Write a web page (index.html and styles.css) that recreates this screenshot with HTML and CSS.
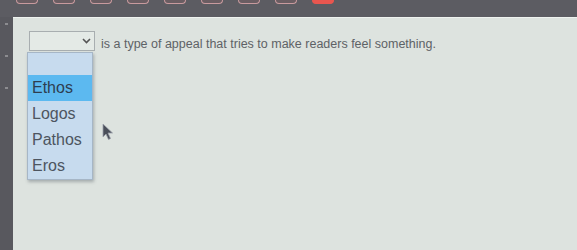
FILE: index.html
```html
<!DOCTYPE html>
<html lang="en">
<head>
    <meta charset="UTF-8">
    <title>Question</title>
    <link rel="stylesheet" href="styles.css">
</head>
<body>

<!-- Question tabs along the top -->
<div class="tabs">
    <span class="tab"></span>
    <span class="tab"></span>
    <span class="tab"></span>
    <span class="tab"></span>
    <span class="tab"></span>
    <span class="tab"></span>
    <span class="tab"></span>
    <span class="tab"></span>
    <span class="tab current"></span>
</div>

<div class="main">
    <div class="gutter">
        <span class="mark"></span>
        <span class="mark"></span>
        <span class="mark"></span>
    </div>

    <div class="panel">
        <div class="question">
            <div class="select">
                <div class="select-box">
                    <svg class="chevron" width="9" height="6" viewBox="0 0 9 6"><path d="M1 1 L4.5 4.5 L8 1" fill="none" stroke="#555" stroke-width="1.6"/></svg>
                </div>
                <ul class="options">
                    <li class="blank"></li>
                    <li class="active">Ethos</li>
                    <li>Logos</li>
                    <li>Pathos</li>
                    <li>Eros</li>
                </ul>
            </div>
            <span class="prompt">is a type of appeal that tries to make readers feel something.</span>
        </div>

        <!-- mouse pointer -->
        <svg class="pointer" width="12" height="18" viewBox="0 0 12 18">
            <path d="M1 1 L1 14 L4 11 L6.5 16.5 L8.5 15.5 L6 10 L10.5 10 Z" fill="#4a4f5a" stroke="#9aa0a8" stroke-width="0.8"/>
        </svg>
    </div>
</div>

</body>
</html>
```

FILE: styles.css
```css
body, html {
    margin: 0;
    padding: 0;
    height: 100%;
    overflow: hidden;
    background-color: #5c5c62;
    font-family: "Liberation Sans", Arial, sans-serif;
}

/* Tabs at the top */
.tabs {
    display: flex;
    gap: 15px;
    height: 17px;
    padding-left: 16px;
}

.tab {
    width: 20px;
    height: 3px;
    border: 1px solid #c89a9e;
    border-top: none;
    border-radius: 0 0 4px 4px;
    background-color: #6a5d62;
}

.tab.current {
    background-color: #e8564f;
    border-color: #e8564f;
}

/* Main area */
.main {
    display: flex;
    height: 233px;
}

.gutter {
    width: 13px;
    display: flex;
    flex-direction: column;
    align-items: center;
    gap: 30px;
    padding-top: 6px;
    background-color: #58585e;
}

.mark {
    width: 3px;
    height: 2px;
    background-color: #8c8c90;
}

.panel {
    flex: 1;
    position: relative;
    background-color: #dde3df;
    border-top: 1px solid #eef2ef;
    padding: 13px 0 0 16px;
}

.question {
    display: flex;
    align-items: flex-start;
    gap: 6px;
}

/* Dropdown */
.select {
    position: relative;
}

.select-box {
    width: 66px;
    height: 20px;
    border: 1px solid #a8aeb0;
    background-color: #e4eae6;
    display: flex;
    align-items: center;
    justify-content: flex-end;
    padding-right: 3px;
    box-sizing: border-box;
}

.options {
    position: absolute;
    top: 21px;
    left: -2px;
    width: 66px;
    margin: 0;
    padding: 0;
    list-style: none;
    background-color: #c7dbee;
    border: 1px solid #a6b6c6;
    box-shadow: 1px 2px 3px rgba(60, 70, 80, 0.35);
    box-sizing: border-box;
}

.options li {
    height: 26px;
    line-height: 26px;
    padding-left: 4px;
    font-size: 16px;
    color: #4d5560;
}

.options li.blank {
    height: 22px;
}

.options li.active {
    background-color: #5cb9f0;
    color: #2e3e50;
}

.prompt {
    font-size: 12.5px;
    line-height: 18px;
    padding-top: 4px;
    color: #5e6266;
}

.pointer {
    position: absolute;
    left: 89px;
    top: 105px;
}
```
